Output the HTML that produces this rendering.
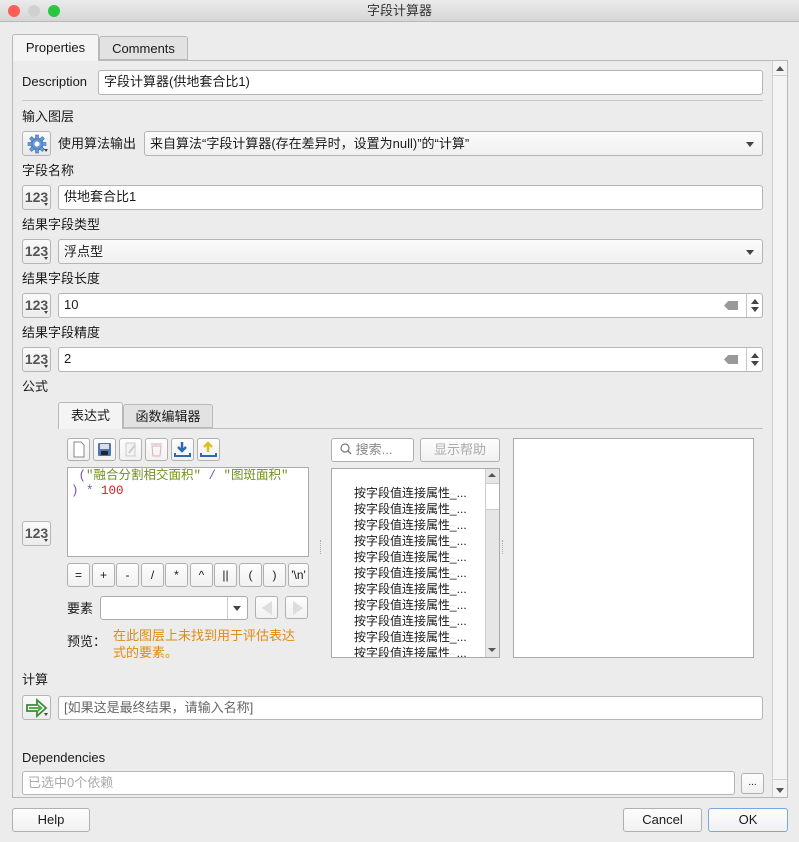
<!DOCTYPE html>
<html><head><meta charset="utf-8"><style>
*{box-sizing:border-box;margin:0;padding:0}
body{width:799px;height:842px;background:#ececec;font-family:"Liberation Sans","Noto Sans CJK SC",sans-serif;font-size:13px;color:#1a1a1a;position:relative;overflow:hidden}
.a{position:absolute}
.lbl{position:absolute;font-size:13px;line-height:16px}
.inp{position:absolute;background:#fff;border:1px solid #b5b5b5;border-radius:3px;padding-left:5px;line-height:22px;white-space:nowrap;overflow:hidden}
.cmb{position:absolute;background:linear-gradient(#fbfbfb,#f0f0f0);border:1px solid #b5b5b5;border-radius:3px;padding-left:5px;line-height:23px;white-space:nowrap}
.cmb:after{content:"";position:absolute;right:8px;top:10px;border-left:4px solid transparent;border-right:4px solid transparent;border-top:5px solid #444}
.btn{position:absolute;background:linear-gradient(#fdfdfd,#f1f1f1);border:1px solid #b0b0b0;border-radius:3px;text-align:center}
.b123{position:absolute;width:29px;height:25px;background:linear-gradient(#fafafa,#ececec);border:1px solid #b5b5b5;border-radius:3px;color:#555;font-size:14px;font-weight:bold;line-height:23px;text-align:center}
.b123:after{content:"";position:absolute;right:2px;bottom:3px;border-left:2.5px solid transparent;border-right:2.5px solid transparent;border-top:3px solid #444}
.clr{position:absolute;right:24px;top:7px;width:14px;height:9px;background:#999;clip-path:polygon(30% 0,100% 0,100% 100%,30% 100%,0 50%)}
.spin{position:absolute;right:0;top:0;width:16px;height:100%;border-left:1px solid #c8c8c8}
.spin:before{content:"";position:absolute;left:4px;top:5px;border-left:4px solid transparent;border-right:4px solid transparent;border-bottom:5px solid #444}
.spin:after{content:"";position:absolute;left:4px;bottom:5px;border-left:4px solid transparent;border-right:4px solid transparent;border-top:5px solid #444}
.op{position:absolute;top:563px;width:23px;height:24px;background:linear-gradient(#fdfdfd,#f1f1f1);border:1px solid #b0b0b0;border-radius:3px;text-align:center;line-height:22px;font-size:12px}
.tb{position:absolute;top:438px;width:23px;height:23px;background:linear-gradient(#fdfdfd,#f1f1f1);border:1px solid #b0b0b0;border-radius:3px}
.li{position:absolute;left:354px;font-size:12px;line-height:16px}
</style></head><body>
<!-- title bar -->
<div class="a" style="left:0;top:0;width:799px;height:22px;background:linear-gradient(#ebebeb,#d6d6d6);border-bottom:1px solid #b8b8b8"></div>
<div class="a" style="left:8px;top:5px;width:12px;height:12px;border-radius:50%;background:#fc5f57"></div>
<div class="a" style="left:28px;top:5px;width:12px;height:12px;border-radius:50%;background:#d0d0d0"></div>
<div class="a" style="left:48px;top:5px;width:12px;height:12px;border-radius:50%;background:#29c740"></div>
<div class="lbl" style="left:0;width:799px;text-align:center;top:3px;color:#333">字段计算器</div>

<!-- tabs -->
<div class="a" style="left:12px;top:60px;width:776px;height:738px;border:1px solid #b8b8b8;background:#ececec"></div>
<div class="a" style="left:12px;top:34px;width:87px;height:27px;border:1px solid #b8b8b8;border-bottom:none;background:#f4f4f4;border-radius:3px 3px 0 0;text-align:center;line-height:26px">Properties</div>
<div class="a" style="left:99px;top:36px;width:89px;height:24px;border:1px solid #b8b8b8;background:#e2e2e2;border-radius:3px 3px 0 0;text-align:center;line-height:24px">Comments</div>

<!-- main scrollbar -->
<div class="a" style="left:772px;top:61px;width:15px;height:736px;background:#f4f4f4;border-left:1px solid #d0d0d0"></div>
<div class="a" style="left:776px;top:66px;border-left:4px solid transparent;border-right:4px solid transparent;border-bottom:5px solid #555"></div>
<div class="a" style="left:773px;top:75px;width:14px;height:1px;background:#ccc"></div>
<div class="a" style="left:773px;top:779px;width:14px;height:1px;background:#ccc"></div>
<div class="a" style="left:776px;top:788px;border-left:4px solid transparent;border-right:4px solid transparent;border-top:5px solid #555"></div>

<div class="lbl" style="left:22px;top:74px">Description</div>
<div class="inp" style="left:98px;top:70px;width:665px;height:25px">字段计算器(供地套合比1)</div>
<div class="a" style="left:22px;top:100px;width:741px;height:1px;background:#c8c8c8"></div>

<div class="lbl" style="left:22px;top:109px">输入图层</div>
<div class="b123" style="left:22px;top:131px;background:linear-gradient(#fafafa,#e8e8e8)"><svg width="22" height="22" viewBox="0 0 22 22" style="margin-top:1px"><g fill="#6a9ad6" stroke="#3d6fb0" stroke-width="0.6"><circle cx="11" cy="11" r="6"/><g id="t"><rect x="9.5" y="2" width="3" height="4"/><rect x="9.5" y="16" width="3" height="4"/><rect x="2" y="9.5" width="4" height="3"/><rect x="16" y="9.5" width="4" height="3"/></g><g transform="rotate(45 11 11)"><rect x="9.5" y="2" width="3" height="4"/><rect x="9.5" y="16" width="3" height="4"/><rect x="2" y="9.5" width="4" height="3"/><rect x="16" y="9.5" width="4" height="3"/></g></g><circle cx="11" cy="11" r="2.5" fill="#fff"/></svg></div>
<div class="lbl" style="left:58px;top:136px">使用算法输出</div>
<div class="cmb" style="left:144px;top:131px;width:619px;height:25px">来自算法“字段计算器(存在差异时，设置为null)”的“计算”</div>

<div class="lbl" style="left:22px;top:163px">字段名称</div>
<div class="b123" style="left:22px;top:185px">123</div>
<div class="inp" style="left:58px;top:185px;width:705px;height:25px">供地套合比1</div>

<div class="lbl" style="left:22px;top:217px">结果字段类型</div>
<div class="b123" style="left:22px;top:239px">123</div>
<div class="cmb" style="left:58px;top:239px;width:705px;height:25px">浮点型</div>

<div class="lbl" style="left:22px;top:271px">结果字段长度</div>
<div class="b123" style="left:22px;top:293px">123</div>
<div class="inp" style="left:58px;top:293px;width:705px;height:25px">10<span class="clr"></span><span class="spin"></span></div>

<div class="lbl" style="left:22px;top:325px">结果字段精度</div>
<div class="b123" style="left:22px;top:347px">123</div>
<div class="inp" style="left:58px;top:347px;width:705px;height:25px">2<span class="clr"></span><span class="spin"></span></div>

<div class="lbl" style="left:22px;top:379px">公式</div>
<div class="a" style="left:58px;top:428px;width:705px;height:1px;background:#c0c0c0"></div>
<div class="a" style="left:58px;top:402px;width:65px;height:27px;border:1px solid #b8b8b8;border-bottom:none;background:#f4f4f4;border-radius:3px 3px 0 0;text-align:center;line-height:26px">表达式</div>
<div class="a" style="left:123px;top:404px;width:90px;height:24px;border:1px solid #b8b8b8;background:#e2e2e2;border-radius:3px 3px 0 0;text-align:center;line-height:24px">函数编辑器</div>

<div class="tb" style="left:67px"><svg width="21" height="21"><path d="M6 3h7l3 3v12H6z" fill="#fff" stroke="#888"/></svg></div>
<div class="tb" style="left:93px"><svg width="21" height="21"><rect x="4" y="4" width="13" height="13" rx="1" fill="#4a78b0"/><rect x="6" y="5" width="9" height="5" fill="#dde"/><rect x="7" y="12" width="7" height="4" fill="#223"/></svg></div>
<div class="tb" style="left:119px"><svg width="21" height="21"><path d="M6 4h9v13H6z" fill="#f4f4f4" stroke="#ccc"/><path d="M9 14l6-8" stroke="#ccc" stroke-width="2"/></svg></div>
<div class="tb" style="left:145px"><svg width="21" height="21"><path d="M6 7h9l-1 10H7z M5 5h11" fill="none" stroke="#d8b0b0"/></svg></div>
<div class="tb" style="left:171px"><svg width="21" height="21"><path d="M10 3v9M6 8l4 4 4-4" stroke="#2e68b0" stroke-width="2.5" fill="none"/><path d="M3 14v3h15v-3" stroke="#2e68b0" stroke-width="2" fill="none"/></svg></div>
<div class="tb" style="left:197px"><svg width="21" height="21"><path d="M10 13V4M6 8l4-4 4 4" stroke="#d8c020" stroke-width="2.5" fill="none"/><path d="M3 14v3h15v-3" stroke="#2e68b0" stroke-width="2" fill="none"/></svg></div>

<div class="a" style="left:67px;top:467px;width:242px;height:90px;background:#fff;border:1px solid #aaa;font-family:'Liberation Mono','Noto Sans CJK SC',monospace;font-size:12.5px;line-height:15px;padding:1px 0 0 3px">
<div><span style="color:#8050b0">&nbsp;(</span><span style="color:#709020">"融合分割相交面积"</span><span style="color:#8050b0"> / </span><span style="color:#709020">"图斑面积"</span></div>
<div><span style="color:#8050b0">) * </span><span style="color:#d02020">100</span></div></div>
<div class="b123" style="left:22px;top:521px">123</div>

<div class="op" style="left:67px">=</div>
<div class="op" style="left:92px">+</div>
<div class="op" style="left:116px">-</div>
<div class="op" style="left:141px">/</div>
<div class="op" style="left:165px">*</div>
<div class="op" style="left:190px">^</div>
<div class="op" style="left:214px">||</div>
<div class="op" style="left:239px">(</div>
<div class="op" style="left:263px">)</div>
<div class="op" style="left:288px;width:21px">'\n'</div>

<div class="lbl" style="left:67px;top:601px">要素</div>
<div class="a" style="left:100px;top:596px;width:148px;height:24px;background:#fff;border:1px solid #aaa;border-radius:3px"><span style="position:absolute;right:0;top:0;width:20px;height:22px;border-left:1px solid #ccc"></span><span style="position:absolute;right:6px;top:9px;border-left:4px solid transparent;border-right:4px solid transparent;border-top:5px solid #444"></span></div>
<div class="btn" style="left:255px;top:596px;width:23px;height:23px"><span style="position:absolute;left:6px;top:4px;border-top:7px solid transparent;border-bottom:7px solid transparent;border-right:10px solid #ddd"></span></div>
<div class="btn" style="left:285px;top:596px;width:23px;height:23px"><span style="position:absolute;left:7px;top:4px;border-top:7px solid transparent;border-bottom:7px solid transparent;border-left:10px solid #ddd"></span></div>
<div class="lbl" style="left:67px;top:634px">预览：</div>
<div class="lbl" style="left:113px;top:627px;color:#e08a10;line-height:17px">在此图层上未找到用于评估表达<br>式的要素。</div>

<div class="a" style="left:320px;top:540px;width:1px;height:14px;border-left:1px dotted #aaa"></div>
<div class="a" style="left:502px;top:540px;width:1px;height:14px;border-left:1px dotted #aaa"></div>

<div class="a" style="left:331px;top:438px;width:83px;height:24px;background:#fff;border:1px solid #b0b0b0;border-radius:3px;color:#888;line-height:22px;padding-left:8px"><svg width="12" height="12" style="vertical-align:-1px"><circle cx="5" cy="5" r="4" fill="none" stroke="#777" stroke-width="1.2"/><path d="M8 8l3 3" stroke="#777" stroke-width="1.3"/></svg> 搜索...</div>
<div class="btn" style="left:420px;top:438px;width:80px;height:24px;color:#aaa;line-height:22px">显示帮助</div>

<div class="a" style="left:331px;top:468px;width:169px;height:190px;background:#fff;border:1px solid #aaa;overflow:hidden"></div>
<div class="a" style="left:485px;top:469px;width:14px;height:188px;background:#e6e6e6;border-left:1px solid #ccc"></div>
<div class="a" style="left:486px;top:483px;width:13px;height:27px;background:#fff;border-bottom:1px solid #ccc;border-top:1px solid #ccc"></div>
<div class="a" style="left:488px;top:473px;border-left:4px solid transparent;border-right:4px solid transparent;border-bottom:4px solid #555"></div>
<div class="a" style="left:488px;top:648px;border-left:4px solid transparent;border-right:4px solid transparent;border-top:4px solid #555"></div>
<div class="a" style="left:332px;top:469px;width:152px;height:188px;overflow:hidden">
<div class="li" style="left:22px;top:16px">按字段值连接属性_...</div>
<div class="li" style="left:22px;top:32px">按字段值连接属性_...</div>
<div class="li" style="left:22px;top:48px">按字段值连接属性_...</div>
<div class="li" style="left:22px;top:64px">按字段值连接属性_...</div>
<div class="li" style="left:22px;top:80px">按字段值连接属性_...</div>
<div class="li" style="left:22px;top:96px">按字段值连接属性_...</div>
<div class="li" style="left:22px;top:112px">按字段值连接属性_...</div>
<div class="li" style="left:22px;top:128px">按字段值连接属性_...</div>
<div class="li" style="left:22px;top:144px">按字段值连接属性_...</div>
<div class="li" style="left:22px;top:160px">按字段值连接属性_...</div>
<div class="li" style="left:22px;top:176px">按字段值连接属性_...</div>
</div>
<div class="a" style="left:513px;top:438px;width:241px;height:220px;background:#fff;border:1px solid #aaa"></div>

<div class="lbl" style="left:22px;top:672px">计算</div>
<div class="b123" style="left:22px;top:695px"><svg width="24" height="20" viewBox="0 0 24 20" style="margin-top:2px"><path d="M2 7h10V2l9 8-9 8v-5H2z" fill="#fff" stroke="#3a8a3a" stroke-width="1.8"/><path d="M4 9h9v-3l5 4-5 4v-3H4z" fill="#5aaa4a"/></svg></div>
<div class="inp" style="left:58px;top:696px;width:705px;height:24px;color:#666">[如果这是最终结果，请输入名称]</div>

<div class="lbl" style="left:22px;top:750px">Dependencies</div>
<div class="inp" style="left:22px;top:771px;width:713px;height:24px;color:#aaa">已选中0个依赖</div>
<div class="btn" style="left:741px;top:773px;width:23px;height:21px;font-size:10px;line-height:17px">...</div>

<div class="btn" style="left:12px;top:808px;width:78px;height:24px;line-height:22px">Help</div>
<div class="btn" style="left:623px;top:808px;width:79px;height:24px;line-height:22px">Cancel</div>
<div class="btn" style="left:708px;top:808px;width:80px;height:24px;line-height:22px;border-color:#7aa7e0">OK</div>
</body></html>
